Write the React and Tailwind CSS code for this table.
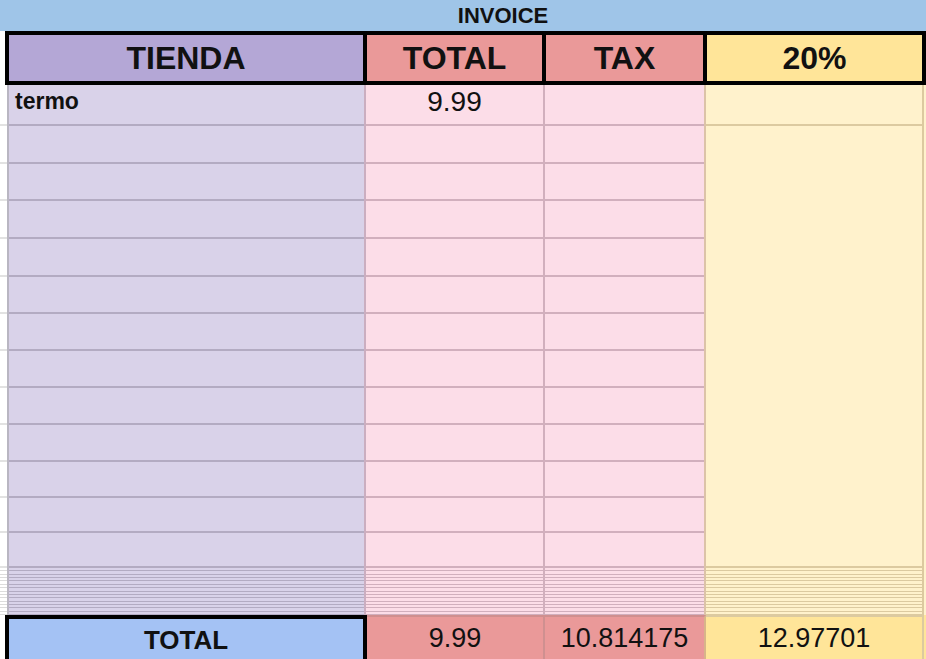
import React from 'react';

// row heights of the body (line included at bottom of each row)
const rowHeights = [41, 38, 37, 38, 38, 37, 37, 37, 37, 37, 36, 35, 35];
const thinRows = Array.from({ length: 14 });

const BodyColumn = ({ bg, lineColor, widthClass, borderClass, firstText, textClass, plain }) => (
  <div className={`flex flex-col ${widthClass} ${bg} ${borderClass}`}>
    {rowHeights.map((h, i) => {
      const showLine = !plain || i === 0;
      return (
        <div
          key={i}
          className={`flex items-end shrink-0 box-border ${showLine ? 'border-b-2' : ''} ${lineColor}`}
          style={{ height: h }}
        >
          {i === 0 && firstText ? <span className={textClass}>{firstText}</span> : null}
        </div>
      );
    })}
    {plain && <div className={`border-b-2 ${lineColor} -mt-[2px]`} />}
    {thinRows.map((_, i) => (
      <div key={'t' + i} className={`h-[3.36px] shrink-0 box-border border-b ${lineColor}`} />
    ))}
  </div>
);

export default function App() {
  return (
    <div className="w-[926px] h-[659px] overflow-hidden bg-white text-[#111] font-['Liberation_Sans',Arial,sans-serif]">
      {/* title band */}
      <div className="h-[31px] bg-[#9fc5e8] flex">
        <div className="ml-[80px] flex-1 flex items-center justify-center text-[22px] font-bold leading-none pt-[1px]">
          INVOICE
        </div>
      </div>

      {/* header row */}
      <div className="flex h-[54px]">
        <div className="w-[5px] bg-white" />
        <div className="w-[921px] flex border-4 border-black text-[32px] font-bold leading-none">
          <div className="w-[354px] bg-[#b4a7d6] flex items-center justify-center">TIENDA</div>
          <div className="w-[179px] border-l-4 border-black bg-[#ea9999] flex items-center justify-center">TOTAL</div>
          <div className="w-[161px] border-l-4 border-black bg-[#ea9999] flex items-center justify-center">TAX</div>
          <div className="flex-1 border-l-4 border-black bg-[#ffe599] flex items-center justify-center">20%</div>
        </div>
      </div>

      {/* body */}
      <div className="flex h-[530px] overflow-hidden">
        <div className="w-[7px] flex flex-col">
          {rowHeights.map((h, i) => (
            <div key={i} className="shrink-0 box-border border-b-2 border-[#e2e2e2]" style={{ height: h }} />
          ))}
          {thinRows.map((_, i) => (
            <div key={'s' + i} className="h-[3.36px] shrink-0 box-border border-b border-[#dcdcdc]" />
          ))}
        </div>
        <BodyColumn
          bg="bg-[#d9d2e9]"
          lineColor="border-[#b3abc2]"
          widthClass="w-[359px]"
          borderClass="border-l-2 border-l-[#b9b6c2] border-r-2 border-r-[#cbaec0]"
          firstText="termo"
          textClass="text-[23px] font-bold leading-none pl-[6px] pb-[11px]"
        />
        <BodyColumn
          bg="bg-[#fcdde8]"
          lineColor="border-[#d1afbd]"
          widthClass="w-[179px]"
          borderClass="border-r-2 border-r-[#d1afbd]"
          firstText="9.99"
          textClass="w-full text-center text-[28px] leading-none pb-[8px]"
        />
        <BodyColumn
          bg="bg-[#fcdde8]"
          lineColor="border-[#d1afbd]"
          widthClass="w-[161px]"
          borderClass="border-r-2 border-r-[#dcc3a8]"
        />
        <BodyColumn
          bg="bg-[#fff2cc]"
          lineColor="border-[#dccaa0]"
          widthClass="w-[218px]"
          borderClass="border-r-2 border-r-[#dccaa0]"
          plain
        />
        <div className="flex-1 bg-[#fff2cc]" />
      </div>

      {/* total row */}
      <div className="flex h-[45px] text-[27px] leading-none">
        <div className="w-[5px] bg-white" />
        <div className="w-[362px] border-4 border-b-0 border-black bg-[#a4c2f4] flex items-center justify-center font-bold text-[26px]">
          TOTAL
        </div>
        <div className="w-[178px] border-t-2 border-[#d08f8f] border-r-2 border-r-[#cf9090] bg-[#ea9999] flex items-center justify-center">
          9.99
        </div>
        <div className="w-[161px] border-t-2 border-[#d08f8f] border-r-2 border-r-[#d8b48a] bg-[#ea9999] flex items-center justify-center">
          10.814175
        </div>
        <div className="w-[218px] border-t-2 border-[#dccaa0] border-r-2 border-r-[#dccaa0] bg-[#ffe599] flex items-center justify-center">
          12.97701
        </div>
        <div className="flex-1 bg-[#ffe599]" />
      </div>
    </div>
  );
}
